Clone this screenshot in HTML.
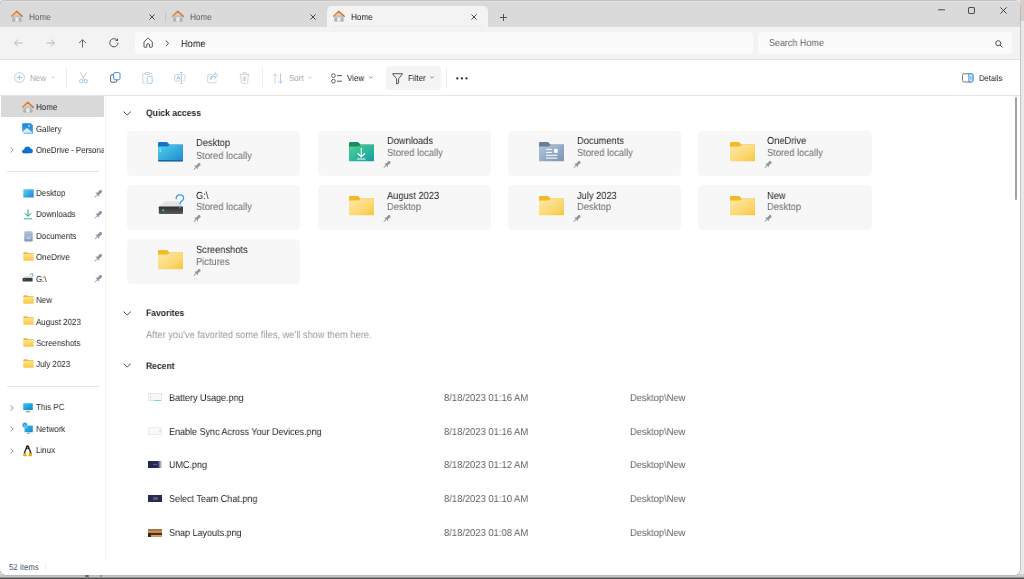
<!DOCTYPE html>
<html><head><meta charset="utf-8">
<style>
*{margin:0;padding:0;box-sizing:border-box}
html,body{width:1024px;height:579px;overflow:hidden;background:#e9e9e9}
body{font-family:"Liberation Sans",sans-serif;color:#1c1c1c;position:relative}
.a{position:absolute}
.t{position:absolute;white-space:nowrap;font-size:10.12px;line-height:12px;will-change:transform;text-rendering:geometricPrecision;transform-origin:0 0;transform:scaleX(0.9091)}
svg{position:absolute;overflow:visible}
#bgR{left:1020px;top:0;width:4px;height:21px;background:#d6cecb}
#bgB{left:0;top:574px;width:1024px;height:5px;background:linear-gradient(#d2d2d2 0,#c6c6c6 60%,#7a7a7a 75%,#505050 88%,#444 100%)}
#win{left:0;top:0;width:1020px;height:574.5px;border-radius:6px 8px 6px 6px;overflow:hidden;background:#fff;box-shadow:0 0 0 0.6px #a8a8a8}
#tabbar{left:0;top:0;width:1020px;height:27px;background:#dadada;border-top:1px solid #c6c2c0;box-shadow:inset 0 1px 0 #e2e2e2}
#addr{left:0;top:27px;width:1020px;height:33px;background:#f3f3f3;border-bottom:1px solid #e3e3e3}
#tool{left:0;top:60px;width:1020px;height:36px;background:#fff;border-bottom:1px solid #e5e5e5}
#side{left:0;top:96px;width:106px;height:463px;background:#fff;border-right:1px solid #f3f3f3}
#content{left:106px;top:96px;width:914px;height:479px;background:#fff}
.tb{font-size:8.80px;color:#1c1c1c}
.dis{color:#a6a6a6}
.sb{font-size:8.80px;color:#1f1f1f}
.ct{font-size:10.23px;color:#262626}
.cs{font-size:10.23px;color:#6b6b6b}
.hd{font-size:9.46px;font-weight:bold;color:#2a2a2a}
.card{position:absolute;width:173.2px;height:45.3px;background:#f7f7f7;border-radius:4.5px}
</style></head><body>
<div id="bgR" class="a"></div>
<div id="bgB" class="a"></div>
<div id="win" class="a">
  <div id="tabbar" class="a"></div>
  <div id="addr" class="a"></div>
  <div id="tool" class="a"></div>
  <div id="side" class="a"></div>
  <div id="content" class="a"></div>
</div>
<!-- TABS -->
<div class="a" style="left:327px;top:6px;width:161px;height:22px;background:#f3f3f3;border-radius:5px 5px 0 0"></div>
<div class="a" style="left:165px;top:12px;width:1px;height:10px;background:#c6c6c6"></div>
<div class="a" style="left:332px;top:26.2px;width:151px;height:1.2px;background:#eaeaea"></div>
<svg id="ico-home" width="0" height="0" style="left:0;top:0">
  <defs>
    <linearGradient id="gHouse" x1="0" y1="0" x2="0" y2="1"><stop offset="0" stop-color="#dcdcdc"/><stop offset="1" stop-color="#a9a9a9"/></linearGradient>
    <linearGradient id="gRoof" x1="0" y1="0" x2="1" y2="0"><stop offset="0" stop-color="#f08a24"/><stop offset="1" stop-color="#e0661a"/></linearGradient>
    <symbol id="home" viewBox="0 0 12 12">
      <path d="M1.2 5.2 L5.8 1.6 L10.6 5.2 V11.5 H1.2 Z" fill="url(#gHouse)"/>
      <rect x="4.3" y="7.3" width="3.3" height="4.2" fill="#ececec"/>
      <path d="M0.5 6.2 L5.8 1.2 L11.2 6.2" fill="none" stroke="url(#gRoof)" stroke-width="1.5" stroke-linecap="round" stroke-linejoin="round"/>
    </symbol>
    <symbol id="xx" viewBox="0 0 7 7"><path d="M0.5 0.5 L6.5 6.5 M6.5 0.5 L0.5 6.5" stroke="#3a3a3a" stroke-width="1.05" fill="none"/></symbol>
  </defs>
</svg>
<svg style="left:11px;top:10px" width="12" height="12"><use href="#home"/></svg>
<div class="t" style="left:29px;top:10.8px;font-size:9.0px;color:#5b5b5b">Home</div>
<svg style="left:149.0px;top:13.6px" width="6" height="6"><use href="#xx"/></svg>
<svg style="left:172px;top:10px" width="12" height="12"><use href="#home"/></svg>
<div class="t" style="left:190px;top:10.8px;font-size:9.0px;color:#5b5b5b">Home</div>
<svg style="left:310.0px;top:13.6px" width="6" height="6"><use href="#xx"/></svg>
<svg style="left:333px;top:10px" width="12" height="12"><use href="#home"/></svg>
<div class="t" style="left:350.6px;top:10.8px;font-size:9.0px;color:#1a1a1a">Home</div>
<svg style="left:471.0px;top:13.6px" width="6" height="6"><use href="#xx"/></svg>
<svg style="left:500px;top:14px" width="7" height="7"><path d="M3.5 0 V7 M0 3.5 H7" stroke="#3a3a3a" stroke-width="0.85"/></svg>
<!-- window controls -->
<svg style="left:937.5px;top:9px" width="7" height="2"><path d="M0 0.8 H7" stroke="#4a4a4a" stroke-width="1"/></svg>
<svg style="left:968.3px;top:6.7px" width="7" height="7"><rect x="0.55" y="0.55" width="5.9" height="5.9" rx="1.1" fill="none" stroke="#4a4a4a" stroke-width="1.05"/></svg>
<svg style="left:999.8px;top:6.8px" width="7" height="7"><path d="M0.4 0.4 L6.6 6.6 M6.6 0.4 L0.4 6.6" stroke="#3a3a3a" stroke-width="0.95"/></svg>
<!-- ADDRESS ROW -->
<svg style="left:14px;top:39px" width="9" height="8"><path d="M0.6 4 H8.5 M4 0.5 L0.6 4 L4 7.5" fill="none" stroke="#b0b0b0" stroke-width="0.9"/></svg>
<svg style="left:45.5px;top:39px" width="9" height="8"><path d="M8.4 4 H0.5 M5 0.5 L8.4 4 L5 7.5" fill="none" stroke="#b0b0b0" stroke-width="0.9"/></svg>
<svg style="left:78px;top:38.5px" width="9" height="9"><path d="M4.5 8.5 V0.7 M1 4.2 L4.5 0.7 L8 4.2" fill="none" stroke="#555" stroke-width="0.9"/></svg>
<svg style="left:109.1px;top:38.2px" width="10" height="10"><path d="M9 4.7 A4.1 4.1 0 1 1 7.4 1.5" fill="none" stroke="#4a4a4a" stroke-width="0.95"/><path d="M8.9 0.2 L9.1 3.1 L6.2 2.7 Z" fill="#4a4a4a"/></svg>
<div class="a" style="left:134.5px;top:31.6px;width:618.5px;height:22.6px;background:#fbfbfb;border-radius:4px"></div>
<svg style="left:142.8px;top:37.4px" width="11" height="11"><path d="M1 4.8 L5.1 1 L9.3 4.8 V9.6 Q9.3 10.3 8.6 10.3 H7 Q6.5 10.3 6.5 9.8 V8 Q6.5 6.7 5.1 6.7 Q3.8 6.7 3.8 8 V9.8 Q3.8 10.3 3.3 10.3 H1.7 Q1 10.3 1 9.6 Z" fill="none" stroke="#505050" stroke-width="0.95" stroke-linejoin="round"/></svg>
<svg style="left:165.3px;top:39.6px" width="5" height="7"><path d="M0.8 0.6 L3.6 3.3 L0.8 6" fill="none" stroke="#444" stroke-width="1"/></svg>
<div class="t" style="left:181.3px;top:38.6px;font-size:10.12px;color:#1a1a1a">Home</div>
<div class="a" style="left:758px;top:31.6px;width:254px;height:22.6px;background:#fbfbfb;border-radius:4px"></div>
<div class="t" style="left:768.5px;top:38px;font-size:9.90px;color:#5f5f5f">Search Home</div>
<svg style="left:995px;top:39.5px" width="8" height="8"><circle cx="3.2" cy="3.2" r="2.5" fill="none" stroke="#444" stroke-width="0.95"/><path d="M5 5 L7.5 7.5" stroke="#444" stroke-width="1"/></svg>
<!-- TOOLBAR -->
<!-- new -->
<svg style="left:13.5px;top:72px" width="11" height="11"><circle cx="5.5" cy="5.5" r="4.9" fill="none" stroke="#c4c4c4" stroke-width="0.9"/><path d="M5.5 3 V8 M3 5.5 H8" stroke="#8cc0ee" stroke-width="0.9"/></svg>
<div class="t tb dis" style="left:30.3px;top:71.6px">New</div>
<svg style="left:50.5px;top:76px" width="4" height="3"><path d="M0.3 0.5 L2 2.2 L3.7 0.5" fill="none" stroke="#b8b8b8" stroke-width="0.7"/></svg>
<div class="a" style="left:65.5px;top:67px;width:1px;height:21px;background:#ececec"></div>
<!-- cut -->
<svg style="left:78px;top:72px" width="11" height="12"><path d="M2.5 0.5 L6.3 7.5 M8.5 0.5 L4.7 7.5" stroke="#bdbdbd" stroke-width="0.8" fill="none"/><circle cx="3.2" cy="9.2" r="1.7" fill="none" stroke="#8cc0ee" stroke-width="0.8"/><circle cx="7.8" cy="9.2" r="1.7" fill="none" stroke="#8cc0ee" stroke-width="0.8"/></svg>
<!-- copy -->
<svg style="left:110px;top:72px" width="11" height="11"><rect x="0.6" y="2.8" width="6.2" height="7.4" rx="1.4" fill="none" stroke="#555" stroke-width="0.95"/><rect x="3.6" y="0.6" width="6.4" height="7.2" rx="1.3" fill="#fff" stroke="#3d8fe0" stroke-width="1"/></svg>
<!-- paste -->
<svg style="left:142px;top:72px" width="11" height="12"><path d="M3 1.5 H1.8 Q0.8 1.5 0.8 2.5 V10.2 Q0.8 11.2 1.8 11.2 H3.5 M7.8 1.5 H9 Q10 1.5 10 2.5 V3.8" fill="none" stroke="#c8c8c8" stroke-width="0.8"/><rect x="3" y="0.5" width="4.8" height="2" rx="0.6" fill="none" stroke="#c8c8c8" stroke-width="0.8"/><rect x="5.2" y="4.6" width="5" height="6.8" rx="1" fill="none" stroke="#8cc0ee" stroke-width="0.8"/></svg>
<!-- rename -->
<svg style="left:174px;top:72px" width="12" height="12"><path d="M6 2.5 H2 Q0.7 2.5 0.7 3.8 V7.7 Q0.7 9 2 9 H6 M8.5 2.5 H9.8 Q11 2.5 11 3.8 V7.7 Q11 9 9.8 9 H8.5" fill="none" stroke="#c8c8c8" stroke-width="0.8"/><path d="M2.8 7.6 L4.4 3.8 L6 7.6 M3.3 6.4 H5.5" fill="none" stroke="#8cc0ee" stroke-width="0.8"/><path d="M7.3 0.5 V11.5 M6.2 0.5 H8.4 M6.2 11.5 H8.4" stroke="#8cc0ee" stroke-width="0.8"/></svg>
<!-- share -->
<svg style="left:207px;top:72px" width="12" height="12"><path d="M4.5 2.5 H2 Q0.7 2.5 0.7 3.8 V9.5 Q0.7 10.8 2 10.8 H7.8 Q9.1 10.8 9.1 9.5 V8.5" fill="none" stroke="#c8c8c8" stroke-width="0.8"/><path d="M3.6 7.8 Q4.2 4.2 8.3 4.2 V6.2 L11 3.3 L8.3 0.6 V2.4 Q3.8 2.6 3.6 7.8 Z" fill="none" stroke="#8cc0ee" stroke-width="0.8" stroke-linejoin="round"/></svg>
<!-- delete -->
<svg style="left:238.5px;top:72px" width="11" height="12"><path d="M0.5 2.3 H10.5 M3.8 2.3 V1.2 Q3.8 0.6 4.4 0.6 H6.6 Q7.2 0.6 7.2 1.2 V2.3 M1.6 2.3 L2.3 10.4 Q2.4 11.3 3.3 11.3 H7.7 Q8.6 11.3 8.7 10.4 L9.4 2.3 M4.3 4.5 V9 M5.5 4.5 V9 M6.7 4.5 V9" fill="none" stroke="#c8c8c8" stroke-width="0.8"/></svg>
<div class="a" style="left:262px;top:67px;width:1px;height:21px;background:#ececec"></div>
<!-- sort -->
<svg style="left:272px;top:72.5px" width="12" height="11"><path d="M3 10.5 V0.8 M0.5 3.3 L3 0.8 L5.5 3.3" fill="none" stroke="#c8c8c8" stroke-width="0.8"/><path d="M8.5 0.5 V10.2 M6 7.7 L8.5 10.2 L11 7.7" fill="none" stroke="#8cc0ee" stroke-width="0.8"/></svg>
<div class="t tb dis" style="left:288.6px;top:71.8px">Sort</div>
<svg style="left:307.8px;top:76px" width="4" height="3"><path d="M0.3 0.5 L2 2.2 L3.7 0.5" fill="none" stroke="#b8b8b8" stroke-width="0.7"/></svg>
<!-- view -->
<svg style="left:331px;top:72.5px" width="12" height="11"><rect x="0.6" y="0.8" width="3.6" height="3.6" rx="1.6" fill="none" stroke="#505050" stroke-width="0.9"/><rect x="0.6" y="6.4" width="3.6" height="3.6" rx="1.6" fill="none" stroke="#505050" stroke-width="0.9"/><path d="M6 2.6 H11 M6 8.2 H11" stroke="#505050" stroke-width="0.95"/></svg>
<div class="t tb" style="left:347.4px;top:71.8px">View</div>
<svg style="left:369.2px;top:76px" width="4" height="3"><path d="M0.3 0.5 L2 2.2 L3.7 0.5" fill="none" stroke="#606060" stroke-width="0.7"/></svg>
<!-- filter -->
<div class="a" style="left:386px;top:66px;width:55px;height:24px;background:#f4f4f4;border-radius:4px"></div>
<svg style="left:392px;top:72.5px" width="12" height="12"><path d="M0.6 0.7 H10.6 L6.6 5.8 V10.2 L4.6 11 V5.8 Z" fill="none" stroke="#444" stroke-width="0.9" stroke-linejoin="round"/></svg>
<div class="t tb" style="left:408.4px;top:71.8px">Filter</div>
<svg style="left:430.2px;top:76px" width="4" height="3"><path d="M0.3 0.5 L2 2.2 L3.7 0.5" fill="none" stroke="#606060" stroke-width="0.7"/></svg>
<div class="a" style="left:445.5px;top:67px;width:1px;height:21px;background:#ececec"></div>
<!-- more -->
<svg style="left:456px;top:76.5px" width="12" height="3"><circle cx="1.3" cy="1.4" r="1.15" fill="#2a2a2a"/><circle cx="5.9" cy="1.4" r="1.15" fill="#2a2a2a"/><circle cx="10.5" cy="1.4" r="1.15" fill="#2a2a2a"/></svg>
<!-- details -->
<svg style="left:962px;top:72.5px" width="12" height="10"><rect x="0.5" y="0.7" width="10.5" height="8.3" rx="1.6" fill="none" stroke="#6a6a6a" stroke-width="0.9"/><path d="M6.8 0.7 H9.4 Q11 0.7 11 2.3 V7.4 Q11 9 9.4 9 H6.8 Z" fill="#cfe4f8" stroke="#3d8fe0" stroke-width="0.9"/><path d="M8.9 3.3 V6.5" stroke="#3d8fe0" stroke-width="0.8"/></svg>
<div class="t tb" style="left:979px;top:72px;font-size:8.4px">Details</div>

<!-- SIDEBAR -->
<svg width="0" height="0" style="left:0;top:0"><defs>
  <linearGradient id="gFold" x1="0" y1="0" x2="0" y2="1"><stop offset="0" stop-color="#fde38a"/><stop offset="1" stop-color="#f7c64a"/></linearGradient>
  <linearGradient id="gDesk" x1="0" y1="0" x2="1" y2="1"><stop offset="0" stop-color="#5fd0f3"/><stop offset="1" stop-color="#1a86d4"/></linearGradient>
  <linearGradient id="gDoc" x1="0" y1="0" x2="0" y2="1"><stop offset="0" stop-color="#b4c4dc"/><stop offset="1" stop-color="#7f96b8"/></linearGradient>
  <linearGradient id="gMon" x1="0" y1="0" x2="1" y2="1"><stop offset="0" stop-color="#2ccbec"/><stop offset="1" stop-color="#1583c9"/></linearGradient>
  <symbol id="sfold" viewBox="0 0 11 9">
    <path d="M0.3 1.2 Q0.3 0.3 1.2 0.3 H4 L5 1.3 H10 Q10.7 1.3 10.7 2 V2.5 H0.3 Z" fill="#eab43e"/>
    <rect x="0.3" y="2.1" width="10.4" height="6.6" rx="0.7" fill="url(#gFold)"/>
  </symbol>
  <symbol id="pin" viewBox="0 0 8 8">
    <g transform="translate(4.6 3.4) rotate(45) translate(-4 -4.2)" fill="#8796a3">
      <rect x="2" y="0" width="4" height="1.3" rx="0.3"/><rect x="2.6" y="1" width="2.8" height="3.8"/><path d="M1.3 6.1 L2.6 4.6 H5.4 L6.7 6.1 Z"/><rect x="3.6" y="6" width="0.8" height="3.6"/>
    </g>
  </symbol>
  <symbol id="chevR" viewBox="0 0 4 6"><path d="M0.6 0.5 L3.2 3 L0.6 5.5" fill="none" stroke="#7a7a7a" stroke-width="0.8"/></symbol>
</defs></svg>
<div class="a" style="left:1.3px;top:96px;width:102.7px;height:21px;background:#d9d9d9;border-radius:1px"></div>
<svg style="left:22px;top:100.5px" width="12" height="12"><use href="#home"/></svg>
<div class="t sb" style="left:36px;top:101.2px">Home</div>
<!-- gallery -->
<svg style="left:22.3px;top:122.6px" width="11" height="11"><defs><linearGradient id="gGal" x1="0" y1="0" x2="0" y2="1"><stop offset="0" stop-color="#1a86dc"/><stop offset="1" stop-color="#3ba4ec"/></linearGradient></defs><rect x="1.6" y="1.4" width="9.2" height="9.4" rx="0.9" fill="#3a8fd8"/><rect x="0.2" y="0.2" width="9.2" height="8.8" rx="0.9" fill="url(#gGal)"/><path d="M0.6 8.6 L5 5 L9.1 8.6 V9 H0.6 Z" fill="#e3f1fc"/><rect x="1.4" y="8.6" width="8.6" height="1.8" fill="#bcdcf6"/><rect x="6.3" y="2" width="1.7" height="1.7" fill="#b8dcf8"/></svg>
<div class="t sb" style="left:36px;top:122.5px">Gallery</div>
<!-- onedrive -->
<svg style="left:9.5px;top:147px" width="4" height="6"><use href="#chevR"/></svg>
<svg style="left:22.3px;top:146px" width="11" height="8"><path d="M2.3 7.3 Q0.2 7.3 0.2 5.4 Q0.2 3.6 2.1 3.4 Q2.8 0.6 5.6 0.6 Q7.8 0.6 8.7 2.6 Q10.9 2.7 10.9 5 Q10.9 7.3 8.8 7.3 Z" fill="#0f74d0"/><path d="M2.3 7.3 Q0.2 7.3 0.2 5.4 Q0.2 4.4 1 3.9 L6.5 7.3 Z" fill="#0a5fb8" opacity="0.5"/></svg>
<div class="t sb" style="left:36px;top:143.8px;width:75px;overflow:hidden;letter-spacing:-0.1px">OneDrive - Personal</div>
<div class="a" style="left:6.5px;top:171px;width:92px;height:1px;background:#e3e3e3"></div>
<!-- desktop -->
<svg style="left:22.5px;top:189px" width="11" height="9"><rect x="0.3" y="0.3" width="10.4" height="8.2" rx="0.6" fill="url(#gDesk)"/></svg>
<div class="t sb" style="left:36px;top:187.1px">Desktop</div>
<svg style="left:93.8px;top:189.5px" width="8" height="8"><use href="#pin"/></svg>
<!-- downloads -->
<svg style="left:23px;top:208.5px" width="10" height="11"><path d="M5 0.5 V7.2 M1.8 4.2 L5 7.4 L8.2 4.2" fill="none" stroke="#1a9e78" stroke-width="1"/><path d="M0.8 9.8 H9.2" stroke="#34b7a0" stroke-width="1"/></svg>
<div class="t sb" style="left:36px;top:208.4px">Downloads</div>
<svg style="left:93.8px;top:210.9px" width="8" height="8"><use href="#pin"/></svg>
<!-- documents -->
<svg style="left:23.5px;top:230.5px" width="9" height="11"><rect x="0.3" y="0.3" width="8.4" height="10.2" rx="0.8" fill="url(#gDoc)"/><path d="M2 6 H7 M2 7.6 H7" stroke="#e8eef7" stroke-width="0.6"/></svg>
<div class="t sb" style="left:36px;top:229.9px">Documents</div>
<svg style="left:93.8px;top:232.4px" width="8" height="8"><use href="#pin"/></svg>
<!-- onedrive folder -->
<svg style="left:22.5px;top:252px" width="11" height="9"><use href="#sfold"/></svg>
<div class="t sb" style="left:36px;top:251.4px">OneDrive</div>
<svg style="left:93.8px;top:253.9px" width="8" height="8"><use href="#pin"/></svg>
<!-- G: -->
<svg style="left:22px;top:273px" width="12" height="10"><path d="M1.2 5.2 L2.2 3.5 H8.8 L10 5.2 Z" fill="#cfcfcf"/><rect x="0.6" y="5" width="10" height="3.6" rx="0.5" fill="#3c3c3c"/><circle cx="2.3" cy="6.8" r="0.45" fill="#3ddc5a"/><path d="M8.2 2.2 Q8.2 0.6 9.7 0.6 Q11.2 0.6 11.2 1.9 Q11.2 2.8 10.2 3.2 Q9.7 3.4 9.7 4.2" fill="none" stroke="#2c8fe3" stroke-width="0.8"/></svg>
<div class="t sb" style="left:36px;top:272.9px">G:\</div>
<svg style="left:93.8px;top:275.4px" width="8" height="8"><use href="#pin"/></svg>
<!-- New -->
<svg style="left:22.5px;top:295px" width="11" height="9"><use href="#sfold"/></svg>
<div class="t sb" style="left:36px;top:294.3px">New</div>
<!-- August 2023 -->
<svg style="left:22.5px;top:316.4px" width="11" height="9"><use href="#sfold"/></svg>
<div class="t sb" style="left:36px;top:315.7px">August 2023</div>
<!-- Screenshots -->
<svg style="left:22.5px;top:337.8px" width="11" height="9"><use href="#sfold"/></svg>
<div class="t sb" style="left:36px;top:337.1px">Screenshots</div>
<!-- July 2023 -->
<svg style="left:22.5px;top:359.2px" width="11" height="9"><use href="#sfold"/></svg>
<div class="t sb" style="left:36px;top:358.4px">July 2023</div>
<div class="a" style="left:6.5px;top:385.5px;width:92px;height:1px;background:#e3e3e3"></div>
<!-- This PC -->
<svg style="left:9.5px;top:404.5px" width="4" height="6"><use href="#chevR"/></svg>
<svg style="left:22.8px;top:402.8px" width="10" height="10"><rect x="0.2" y="0.2" width="9.6" height="6.9" rx="0.5" fill="url(#gMon)"/><path d="M5 7.1 V8.6" stroke="#8a98a4" stroke-width="0.8"/><path d="M2.8 8.8 H7.2" stroke="#6e7c88" stroke-width="0.9"/></svg>
<div class="t sb" style="left:36.2px;top:401.4px">This PC</div>
<!-- Network -->
<svg style="left:9.5px;top:426px" width="4" height="6"><use href="#chevR"/></svg>
<svg style="left:22px;top:422.3px" width="11" height="12"><rect x="2.5" y="3.4" width="8.3" height="6.8" rx="0.5" fill="url(#gMon)"/><path d="M6.6 10.2 V11.2 M5 11.5 H8.2" stroke="#8a98a4" stroke-width="0.7"/><circle cx="2.8" cy="2.9" r="2.6" fill="#2e8fe2" stroke="#fff" stroke-width="0.5"/><path d="M1.6 2 Q2.8 2.6 3.2 4.4" stroke="#e6f3ff" stroke-width="0.7" fill="none"/></svg>
<div class="t sb" style="left:36.2px;top:422.9px">Network</div>
<!-- Linux -->
<svg style="left:9.5px;top:447.5px" width="4" height="6"><use href="#chevR"/></svg>
<svg style="left:22.8px;top:444.8px" width="10" height="12"><path d="M4.6 0.2 Q6.3 0.2 6.4 2.3 Q6.5 3.6 7.6 5.5 Q8.8 7.6 8.3 9.6 L1 9.6 Q0.5 7.6 1.6 5.5 Q2.7 3.6 2.8 2.3 Q2.9 0.2 4.6 0.2 Z" fill="#1e1e1e"/><path d="M4.6 3.6 Q6.6 4.6 6.8 7.6 Q6.7 10.6 4.6 10.6 Q2.5 10.6 2.4 7.6 Q2.6 4.6 4.6 3.6 Z" fill="#fbfbfb"/><path d="M3.7 2.3 H5.5 L4.6 3.5 Z" fill="#e2a800"/><path d="M0 9.9 Q0.5 7.6 2.6 7.9 L3.9 11 Q2 11.6 0.5 11 Z M9.2 9.9 Q8.7 7.6 6.6 7.9 L5.3 11 Q7.2 11.6 8.7 11 Z" fill="#e6ac00"/></svg>
<div class="t sb" style="left:36.2px;top:444.3px">Linux</div>
<!-- status -->
<div class="t" style="left:8.8px;top:561.4px;font-size:8.69px;color:#3e5068">52 items</div>
<div class="a" style="left:45px;top:562px;width:1px;height:9px;background:#f0f0f0"></div>

<div class="a" style="left:85px;top:575px;width:4px;height:1.5px;background:#666;border-radius:1px"></div>
<div class="a" style="left:100px;top:575px;width:1.5px;height:1.5px;background:#6a8a8a;border-radius:1px"></div>

<!-- CONTENT -->
<svg width="0" height="0" style="left:0;top:0"><defs>
  <linearGradient id="gBigFold" x1="0" y1="0" x2="1" y2="1"><stop offset="0" stop-color="#fde9a6"/><stop offset="0.6" stop-color="#fbd873"/><stop offset="1" stop-color="#f5c53c"/></linearGradient>
  <linearGradient id="gBigDesk" x1="0" y1="0" x2="1" y2="1"><stop offset="0" stop-color="#4fd6e8"/><stop offset="1" stop-color="#1e86d2"/></linearGradient>
  <linearGradient id="gBigDl" x1="0" y1="0" x2="1" y2="1"><stop offset="0" stop-color="#4fd590"/><stop offset="1" stop-color="#139ba6"/></linearGradient>
  <linearGradient id="gBigDoc" x1="0" y1="0" x2="1" y2="1"><stop offset="0" stop-color="#b3c6dc"/><stop offset="1" stop-color="#7893b4"/></linearGradient>
  <symbol id="bfold" viewBox="0 0 25 19.5">
    <path d="M0 1.4 Q0 0 1.4 0 H8.4 Q9.3 0 9.9 0.7 L11.4 2.5 H25 V8 H0 Z" fill="#f4b923"/>
    <path d="M0 5.6 Q0 4.4 1.2 4.4 H9.4 Q10.3 4.4 10.9 3.6 L11.1 3.4 Q11.6 2.9 12.4 2.9 H23.9 Q25 2.9 25 4 V18.4 Q25 19.5 23.9 19.5 H1.1 Q0 19.5 0 18.4 Z" fill="url(#gBigFold)"/>
  </symbol>
  <symbol id="ftab" viewBox="0 0 25 19.5"><path d="M0 1.4 Q0 0 1.4 0 H8.4 Q9.3 0 9.9 0.7 L11.4 2.5 H25 V8 H0 Z"/></symbol>
  <symbol id="fbody" viewBox="0 0 25 19.5"><path d="M0 5.6 Q0 4.4 1.2 4.4 H9.4 Q10.3 4.4 10.9 3.6 L11.1 3.4 Q11.6 2.9 12.4 2.9 H23.9 Q25 2.9 25 4 V18.4 Q25 19.5 23.9 19.5 H1.1 Q0 19.5 0 18.4 Z"/></symbol>
  <symbol id="chevD" viewBox="0 0 9 5"><path d="M0.6 0.6 L4.5 4.3 L8.4 0.6" fill="none" stroke="#4a4a4a" stroke-width="1.05"/></symbol>
</defs></svg>
<!-- Quick access -->
<svg style="left:123.4px;top:110.5px" width="8.4" height="4.7"><use href="#chevD"/></svg>
<div class="t hd" style="left:146px;top:107.8px">Quick access</div>

<div class="card" style="left:127.3px;top:130.5px"></div>
<div class="card" style="left:317.8px;top:130.5px"></div>
<div class="card" style="left:508.2px;top:130.5px"></div>
<div class="card" style="left:698.4px;top:130.5px"></div>
<div class="card" style="left:127.3px;top:184.8px"></div>
<div class="card" style="left:317.8px;top:184.8px"></div>
<div class="card" style="left:508.2px;top:184.8px"></div>
<div class="card" style="left:698.4px;top:184.8px"></div>
<div class="card" style="left:127.3px;top:239px"></div>

<!-- Desktop card -->
<svg style="left:158.2px;top:142.1px" width="25" height="19.5" viewBox="0 0 25 19.5"><use href="#ftab" fill="#1a72cf"/><use href="#fbody" fill="url(#gBigDesk)"/><path d="M0 18 H25 V18.4 Q25 19.5 23.9 19.5 H1.1 Q0 19.5 0 18.4 Z" fill="#1d64a6"/><circle cx="2.2" cy="7.2" r="0.55" fill="#e8fbff"/><circle cx="2.2" cy="9.4" r="0.55" fill="#e8fbff"/></svg>
<div class="t ct" style="left:196px;top:138.3px">Desktop</div>
<div class="t cs" style="left:196px;top:151.3px">Stored locally</div>
<svg style="left:192.5px;top:163.3px" width="7.5" height="7.5"><use href="#pin"/></svg>

<!-- Downloads card -->
<svg style="left:349px;top:142.1px" width="25" height="19.5" viewBox="0 0 25 19.5"><use href="#ftab" fill="#1f8a5e"/><use href="#fbody" fill="url(#gBigDl)"/><path d="M12.3 5.9 V14.6 M8.6 11.3 L12.3 14.9 L16 11.3 M8 17 H16.6" fill="none" stroke="#f4fffb" stroke-width="1.2"/></svg>
<div class="t ct" style="left:386.5px;top:136.3px">Downloads</div>
<div class="t cs" style="left:386.5px;top:148px">Stored locally</div>
<svg style="left:383px;top:160.6px" width="7.5" height="7.5"><use href="#pin"/></svg>

<!-- Documents card -->
<svg style="left:539px;top:142.1px" width="25" height="19.5" viewBox="0 0 25 19.5"><use href="#ftab" fill="#667f96"/><use href="#fbody" fill="url(#gBigDoc)"/><path d="M7 7.3 H12.8 M7 10.4 H12.8 M7 13.3 H18.5 M7 16.1 H18.5" stroke="#fff" stroke-width="1"/><rect x="15" y="6.9" width="3.7" height="3.9" fill="#fff"/></svg>
<div class="t ct" style="left:576.8px;top:136.3px">Documents</div>
<div class="t cs" style="left:576.8px;top:148px">Stored locally</div>
<svg style="left:573.3px;top:160.6px" width="7.5" height="7.5"><use href="#pin"/></svg>

<!-- OneDrive card -->
<svg style="left:729.7px;top:142.1px" width="25" height="19.5"><use href="#bfold"/></svg>
<div class="t ct" style="left:767.2px;top:136.3px">OneDrive</div>
<div class="t cs" style="left:767.2px;top:148px">Stored locally</div>
<svg style="left:763.7px;top:160.6px" width="7.5" height="7.5"><use href="#pin"/></svg>

<!-- G: card -->
<svg style="left:158px;top:193.5px" width="27" height="21" viewBox="0 0 27 21"><defs><linearGradient id="gDrv" x1="0" y1="0" x2="0" y2="1"><stop offset="0" stop-color="#2e2e2e"/><stop offset="1" stop-color="#5a5a5a"/></linearGradient></defs><path d="M0.8 12.8 L6.5 7.5 H20.4 L25 12.8 Z" fill="#e3e3e3"/><rect x="0.8" y="12.5" width="24.2" height="7.4" rx="0.8" fill="url(#gDrv)"/><circle cx="5.2" cy="16.3" r="1" fill="#3fe05a"/><path d="M18.2 5.3 Q17.9 0.9 21.9 0.9 Q25.7 0.9 25.6 4.2 Q25.5 6.2 23.5 7.4 Q22 8.3 22 10.6" fill="none" stroke="#3a9ee6" stroke-width="1.3"/><rect x="21.3" y="12.7" width="1.4" height="1.7" fill="#3a9ee6"/></svg>
<div class="t ct" style="left:196px;top:191.1px">G:\</div>
<div class="t cs" style="left:196px;top:202.3px">Stored locally</div>
<svg style="left:192.5px;top:214.8px" width="7.5" height="7.5"><use href="#pin"/></svg>

<!-- August 2023 -->
<svg style="left:348.5px;top:196.3px" width="25" height="19.5"><use href="#bfold"/></svg>
<div class="t ct" style="left:386.5px;top:191.1px">August 2023</div>
<div class="t cs" style="left:386.5px;top:202.3px">Desktop</div>
<svg style="left:383px;top:214.8px" width="7.5" height="7.5"><use href="#pin"/></svg>

<!-- July 2023 -->
<svg style="left:539px;top:196.3px" width="25" height="19.5"><use href="#bfold"/></svg>
<div class="t ct" style="left:576.8px;top:191.1px">July 2023</div>
<div class="t cs" style="left:576.8px;top:202.3px">Desktop</div>
<svg style="left:573.3px;top:214.8px" width="7.5" height="7.5"><use href="#pin"/></svg>

<!-- New -->
<svg style="left:729.5px;top:196.3px" width="25" height="19.5"><use href="#bfold"/></svg>
<div class="t ct" style="left:767.2px;top:191.1px">New</div>
<div class="t cs" style="left:767.2px;top:202.3px">Desktop</div>
<svg style="left:763.7px;top:214.8px" width="7.5" height="7.5"><use href="#pin"/></svg>

<!-- Screenshots -->
<svg style="left:158px;top:250.3px" width="25" height="19.5"><use href="#bfold"/></svg>
<div class="t ct" style="left:196px;top:245.3px">Screenshots</div>
<div class="t cs" style="left:196px;top:256.5px">Pictures</div>
<svg style="left:192.5px;top:269px" width="7.5" height="7.5"><use href="#pin"/></svg>

<!-- Favorites -->
<svg style="left:123.2px;top:310.6px" width="8.4" height="4.7"><use href="#chevD"/></svg>
<div class="t hd" style="left:146px;top:307.6px">Favorites</div>
<div class="t" style="left:146px;top:329.8px;font-size:10.23px;color:#9a9a9a">After you've favorited some files, we'll show them here.</div>

<!-- Recent -->
<svg style="left:123.2px;top:363px" width="8.4" height="4.7"><use href="#chevD"/></svg>
<div class="t hd" style="left:146px;top:361px">Recent</div>

<!-- rows -->
<div class="a" style="left:148.3px;top:393.2px;width:13.6px;height:8px;background:#f6f7f7;border:0.5px solid #e6e6e6"><div class="a" style="left:5px;top:5.6px;width:7px;height:1.6px;background:#86d3de"></div><div class="a" style="left:0.8px;top:0.8px;width:1.2px;height:5.5px;background:#e2e2e2"></div></div>
<div class="t" style="left:169.3px;top:392.8px;font-size:10px;transform:scaleX(0.9);color:#1c1c1c">Battery Usage.png</div>
<div class="t" style="left:443.7px;top:392.8px;font-size:10px;transform:scaleX(0.94);color:#5e5e5e">8/18/2023 01:16 AM</div>
<div class="t" style="left:630.2px;top:392.8px;font-size:10px;transform:scaleX(0.93);color:#5e5e5e">Desktop\New</div>

<div class="a" style="left:148.3px;top:427px;width:13.6px;height:8px;background:#f8f8f8;border:0.5px solid #ececec"><div class="a" style="left:10px;top:1.5px;width:2.5px;height:2px;background:#e6e6e6"></div></div>
<div class="t" style="left:169.3px;top:426.6px;font-size:10px;transform:scaleX(0.9);color:#1c1c1c">Enable Sync Across Your Devices.png</div>
<div class="t" style="left:443.7px;top:426.6px;font-size:10px;transform:scaleX(0.94);color:#5e5e5e">8/18/2023 01:16 AM</div>
<div class="t" style="left:630.2px;top:426.6px;font-size:10px;transform:scaleX(0.93);color:#5e5e5e">Desktop\New</div>

<div class="a" style="left:148.4px;top:460.8px;width:13.6px;height:7.6px;background:linear-gradient(90deg,#23264a 0,#2b2f5a 72%,#7f93b0 84%,#e6ebf0 100%)"><div class="a" style="left:4.5px;top:3px;width:4px;height:1.5px;background:#6a4f9a"></div></div>
<div class="t" style="left:169.3px;top:460.4px;font-size:10px;transform:scaleX(0.9);color:#1c1c1c">UMC.png</div>
<div class="t" style="left:443.7px;top:460.4px;font-size:10px;transform:scaleX(0.94);color:#5e5e5e">8/18/2023 01:12 AM</div>
<div class="t" style="left:630.2px;top:460.4px;font-size:10px;transform:scaleX(0.93);color:#5e5e5e">Desktop\New</div>

<div class="a" style="left:148.4px;top:494.8px;width:13.6px;height:7.6px;background:#272b52"><div class="a" style="left:5px;top:2.6px;width:4.5px;height:2.4px;background:#5f5a6a;border-radius:1px"></div></div>
<div class="t" style="left:169.3px;top:494.2px;font-size:10px;transform:scaleX(0.9);color:#1c1c1c">Select Team Chat.png</div>
<div class="t" style="left:443.7px;top:494.2px;font-size:10px;transform:scaleX(0.94);color:#5e5e5e">8/18/2023 01:10 AM</div>
<div class="t" style="left:630.2px;top:494.2px;font-size:10px;transform:scaleX(0.93);color:#5e5e5e">Desktop\New</div>

<div class="a" style="left:148.4px;top:529.3px;width:13.6px;height:7.6px;background:linear-gradient(#9a7a5a 0,#9a7a5a 18%,#e48a3a 30%,#e07a2a 48%,#3a3530 55%,#3a3530 70%,#d6a070 80%,#c89060 100%)"><div class="a" style="left:0;top:4px;width:3px;height:3.6px;background:#2a2a2a"></div></div>
<div class="t" style="left:169.3px;top:528px;font-size:10px;transform:scaleX(0.9);color:#1c1c1c">Snap Layouts.png</div>
<div class="t" style="left:443.7px;top:528px;font-size:10px;transform:scaleX(0.94);color:#5e5e5e">8/18/2023 01:08 AM</div>
<div class="t" style="left:630.2px;top:528px;font-size:10px;transform:scaleX(0.93);color:#5e5e5e">Desktop\New</div>

<!-- scrollbar -->
<div class="a" style="left:1015px;top:97px;width:2px;height:103px;background:#a2a2a2;border-radius:1px"></div>

</body></html>
